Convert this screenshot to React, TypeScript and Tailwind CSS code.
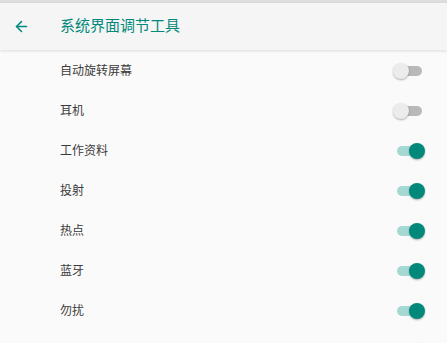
import { ArrowLeft } from "lucide-react";

const items = [
  { label: "自动旋转屏幕", on: false },
  { label: "耳机", on: false },
  { label: "工作资料", on: true },
  { label: "投射", on: true },
  { label: "热点", on: true },
  { label: "蓝牙", on: true },
  { label: "勿扰", on: true },
  { label: "", on: true },
];

function Toggle({ on }: { on: boolean }) {
  return (
    <div className="relative w-[32px] h-[16px] flex items-center justify-center">
      <div
        className={
          on
            ? "w-[25px] h-[10px] rounded-full bg-[#a6d8d3]"
            : "w-[25px] h-[10px] rounded-full bg-[#b9b9b9]"
        }
      />
      <div
        className={
          on
            ? "absolute right-0 top-0 w-[16px] h-[16px] rounded-full bg-[#00897b] shadow-[0_1px_2px_rgba(0,0,0,0.3)]"
            : "absolute left-0 top-0 w-[16px] h-[16px] rounded-full bg-[#ececec] shadow-[0_1px_2px_rgba(0,0,0,0.3)]"
        }
      />
    </div>
  );
}

export default function App() {
  return (
    <div
      className="w-[447px] h-[343px] overflow-hidden bg-[#fafafa] flex flex-col"
      style={{ fontFamily: '"Roboto", "Noto Sans CJK SC", sans-serif' }}
    >
      <div className="h-[3px] bg-[#dedede] shrink-0" />
      {/* App bar */}
      <div className="h-[47px] shrink-0 bg-[#f5f5f5] flex items-center shadow-[0_1px_3px_rgba(0,0,0,0.12)] relative z-10">
        <div className="w-[60px] flex items-center pl-[13px]">
          <ArrowLeft size={17} strokeWidth={2.2} className="text-[#00897b]" />
        </div>
        <span className="text-[15px] text-[#00897b]">系统界面调节工具</span>
      </div>

      <div className="flex flex-col pt-[1px]">
        {items.map((it, i) => (
          <div key={i} className="h-[40px] flex items-center pl-[60px] pr-[22px] justify-between shrink-0">
            <span className="text-[12px] text-[#3a3a3a]">{it.label}</span>
            <Toggle on={it.on} />
          </div>
        ))}
      </div>
    </div>
  );
}
